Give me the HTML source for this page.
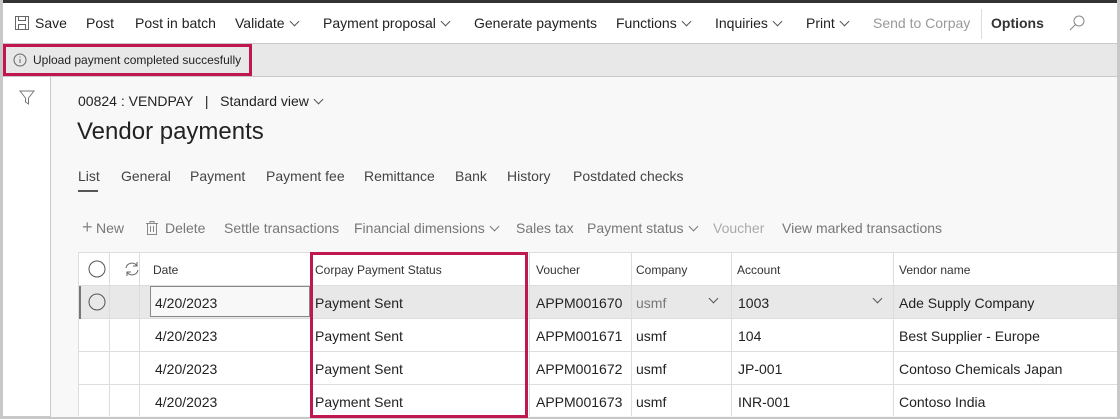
<!DOCTYPE html><html><head><style>
*{box-sizing:border-box;margin:0;padding:0}
body{width:1120px;height:419px;overflow:hidden;font-family:"Liberation Sans",sans-serif;background:#fff;position:relative;color:#222}
.a{position:absolute;white-space:nowrap}
.tb{left:3px;top:3px;width:1114px;height:41px;background:#fff;border-bottom:1px solid #c8c8c8;font-size:14px}
.tb span{position:absolute;top:12px}
.chev{display:inline-block;width:7px;height:7px;border-right:1px solid #555;border-bottom:1px solid #555;transform:rotate(45deg);margin-left:6px;position:relative;top:-3px}
.msg{left:3px;top:44px;width:1114px;height:33px;background:#e8e8e8;border-bottom:1px solid #c8c8c8}
.main{left:50px;top:77px;width:1067px;height:340px;background:#f8f8f8;border-left:1px solid #c8c8c8}
.grid{font-size:14px}
.row{position:absolute;left:78px;width:1039px;height:33px;border-bottom:1px solid #ddd;background:#fff}
.row span{position:absolute;top:9px}
.vl{position:absolute;width:1px;background:#ddd}
</style></head><body>
<div class="a" style="left:0;top:0;width:1120px;height:3px;background:#333"></div>
<div class="a" style="left:0;top:0;width:3px;height:419px;background:#c8c8c8"></div>
<div class="a" style="left:1117px;top:0;width:3px;height:419px;background:#c8c8c8"></div>
<div class="a" style="left:0;top:416px;width:1120px;height:3px;background:#c8c8c8"></div>
<div class="a tb">
<svg style="position:absolute;left:12px;top:13px" width="14" height="14"><rect x="0.5" y="0.5" width="13" height="13" fill="none" stroke="#666"/><rect x="3.5" y="0.5" width="7" height="4" fill="none" stroke="#666"/><rect x="3.5" y="8.5" width="7" height="5" fill="none" stroke="#666"/></svg>
<span style="left:32px">Save</span><span style="left:83px">Post</span><span style="left:132px">Post in batch</span>
<span style="left:232px">Validate<i class="chev"></i></span><span style="left:320px">Payment proposal<i class="chev"></i></span>
<span style="left:471px">Generate payments</span><span style="left:613px">Functions<i class="chev"></i></span>
<span style="left:712px">Inquiries<i class="chev"></i></span><span style="left:803px">Print<i class="chev"></i></span>
<span style="left:870px;color:#999">Send to Corpay</span>
<div style="position:absolute;left:978px;top:6px;width:1px;height:30px;background:#ddd"></div>
<span style="left:988px;font-weight:bold;color:#333">Options</span>
<svg style="position:absolute;left:1066px;top:12px" width="16" height="16"><circle cx="10" cy="6" r="5" fill="none" stroke="#888"/><path d="M6.5 9.5 L1 15" stroke="#888"/></svg>
</div>
<div class="a msg"></div>
<div class="a" style="left:3px;top:44px;width:249px;height:32px;border:3px solid #c0174f"></div>
<svg class="a" style="left:13px;top:53px" width="14" height="14"><circle cx="7" cy="7" r="6" fill="none" stroke="#666"/><path d="M7 6v4M7 3.5v1" stroke="#666"/></svg>
<div class="a" style="left:33px;top:53px;font-size:12px">Upload payment completed succesfully</div>
<svg class="a" style="left:19px;top:90px" width="16" height="16"><path d="M1 1h14l-5.5 7v6l-3-2v-4z" fill="none" stroke="#777"/></svg>
<div class="a main"></div>
<div class="a" style="left:78px;top:93px;font-size:14px">00824 : VENDPAY &nbsp;&nbsp;|&nbsp;&nbsp; Standard view<i class="chev"></i></div>
<div class="a" style="left:77px;top:118px;font-size:24px;color:#222">Vendor payments</div>
<div class="a" style="left:78px;top:168px;font-size:14px;color:#444;word-spacing:0">
<span style="position:absolute;left:0">List</span><span style="position:absolute;left:43px">General</span><span style="position:absolute;left:112px">Payment</span><span style="position:absolute;left:188px">Payment fee</span><span style="position:absolute;left:286px">Remittance</span><span style="position:absolute;left:377px">Bank</span><span style="position:absolute;left:429px">History</span><span style="position:absolute;left:495px">Postdated checks</span></div>
<div class="a" style="left:78px;top:190px;width:20px;height:2px;background:#555"></div>
<div class="a" style="left:82px;top:220px;font-size:14px;color:#777">
<span style="position:absolute;left:0;font-size:18px;top:-3px;color:#888">+</span><span style="position:absolute;left:14px">New</span>
<svg style="position:absolute;left:64px;top:1px" width="12" height="14"><path d="M0 2.5h12M4 2.5V0.5h4v2M1.5 2.5v11h9v-11M4.5 5v6M7.5 5v6" fill="none" stroke="#888"/></svg>
<span style="position:absolute;left:83px">Delete</span><span style="position:absolute;left:142px">Settle transactions</span>
<span style="position:absolute;left:272px">Financial dimensions<i class="chev" style="border-color:#777"></i></span>
<span style="position:absolute;left:434px">Sales tax</span><span style="position:absolute;left:505px">Payment status<i class="chev" style="border-color:#777"></i></span>
<span style="position:absolute;left:631px;color:#aaa">Voucher</span><span style="position:absolute;left:700px">View marked transactions</span></div>
<div class="grid">
<div class="row" style="top:252px;height:34px;border-top:1px solid #ddd;font-size:12px;color:#333"><span style="left:75px;top:10px">Date</span><span style="left:237px;top:10px">Corpay Payment Status</span><span style="left:458px;top:10px">Voucher</span><span style="left:558px;top:10px">Company</span><span style="left:659px;top:10px">Account</span><span style="left:821px;top:10px">Vendor name</span>
<svg style="position:absolute;left:10px;top:7px" width="18" height="18"><circle cx="9" cy="9" r="8" fill="none" stroke="#555"/></svg>
<svg style="position:absolute;left:46px;top:8px" width="16" height="16"><path d="M2 7a6 6 0 0 1 11-2M14 9a6 6 0 0 1-11 2M13 1v4h-4M3 15v-4h4" fill="none" stroke="#666"/></svg></div>
<div class="row" style="top:286px;background:#e8e8e8"><div style="position:absolute;left:0;top:0;width:3px;height:33px;background:#777"></div>
<svg style="position:absolute;left:10px;top:7px" width="18" height="18"><circle cx="9" cy="9" r="8" fill="none" stroke="#555"/></svg>
<div style="position:absolute;left:72px;top:0;width:160px;height:31px;background:#f8f8f8;border:1px solid #888"></div>
<span style="left:77px">4/20/2023</span><span style="left:237px">Payment Sent</span><span style="left:458px">APPM001670</span><span style="left:558px;color:#777">usmf</span><i class="chev" style="position:absolute;left:626px;top:9px"></i><span style="left:660px">1003</span><i class="chev" style="position:absolute;left:790px;top:9px"></i><span style="left:821px">Ade Supply Company</span></div>
<div class="row" style="top:319px"><span style="left:77px">4/20/2023</span><span style="left:237px">Payment Sent</span><span style="left:458px">APPM001671</span><span style="left:558px">usmf</span><span style="left:660px">104</span><span style="left:821px">Best Supplier - Europe</span></div>
<div class="row" style="top:352px"><span style="left:77px">4/20/2023</span><span style="left:237px">Payment Sent</span><span style="left:458px">APPM001672</span><span style="left:558px">usmf</span><span style="left:660px">JP-001</span><span style="left:821px">Contoso Chemicals Japan</span></div>
<div class="row" style="top:385px;height:31px;border-bottom:none"><span style="left:77px">4/20/2023</span><span style="left:237px">Payment Sent</span><span style="left:458px">APPM001673</span><span style="left:558px">usmf</span><span style="left:660px">INR-001</span><span style="left:821px">Contoso India</span></div>
<div class="vl" style="left:78px;top:252px;height:164px"></div>
<div class="vl" style="left:109px;top:252px;height:164px"></div>
<div class="vl" style="left:139px;top:252px;height:164px"></div>
<div class="vl" style="left:529px;top:252px;height:164px"></div>
<div class="vl" style="left:631px;top:252px;height:164px"></div>
<div class="vl" style="left:731px;top:252px;height:164px"></div>
<div class="vl" style="left:893px;top:252px;height:164px"></div>
</div>
<div class="a" style="left:310px;top:252px;width:218px;height:166px;border:3px solid #c0174f"></div>
</body></html>
